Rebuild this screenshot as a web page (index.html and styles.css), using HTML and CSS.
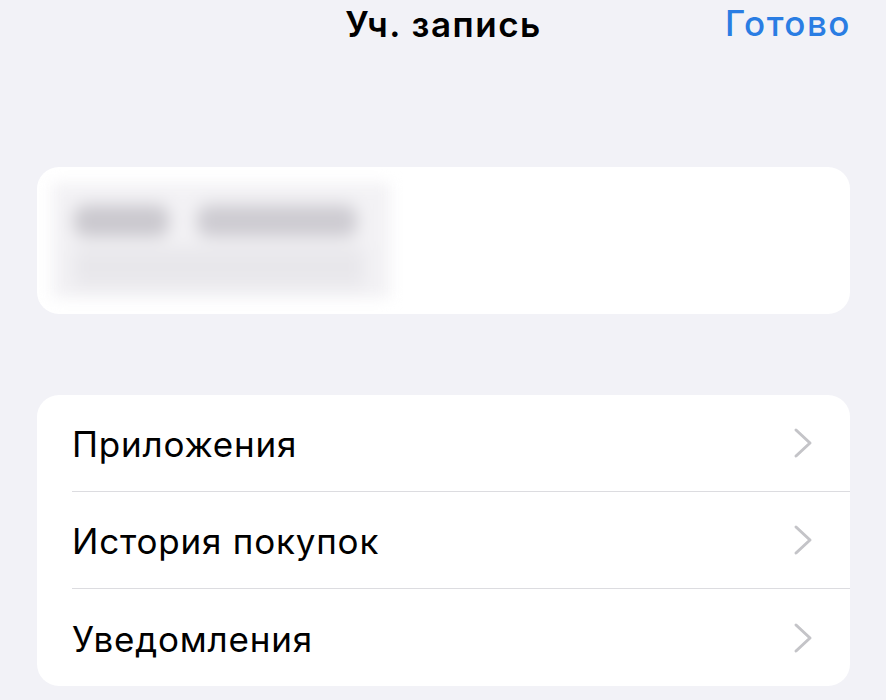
FILE: index.html
```html
<!DOCTYPE html>
<html lang="ru">
<head>
<meta charset="utf-8">
<link rel="stylesheet" href="styles.css">
</head>
<body>
<div class="screen">
  <header class="nav">
    <div class="nav-title">Уч. запись</div>
    <div class="nav-done">Готово</div>
  </header>
  <section class="card profile">
    <div class="blur-wrap">
      <div class="blur-line strong"><span class="b1"></span><span class="b2"></span></div>
      <div class="blur-line soft"></div>
    </div>
  </section>
  <section class="card list">
    <div class="row">
      <span class="label">Приложения</span>
      <svg class="chev" width="20" height="32" viewBox="0 0 20 32"><path d="M3 3 L17 16 L3 29" fill="none" stroke="#c4c4c8" stroke-width="3" stroke-linecap="round" stroke-linejoin="round"/></svg>
    </div>
    <div class="row">
      <span class="label">История покупок</span>
      <svg class="chev" width="20" height="32" viewBox="0 0 20 32"><path d="M3 3 L17 16 L3 29" fill="none" stroke="#c4c4c8" stroke-width="3" stroke-linecap="round" stroke-linejoin="round"/></svg>
    </div>
    <div class="row">
      <span class="label">Уведомления</span>
      <svg class="chev" width="20" height="32" viewBox="0 0 20 32"><path d="M3 3 L17 16 L3 29" fill="none" stroke="#c4c4c8" stroke-width="3" stroke-linecap="round" stroke-linejoin="round"/></svg>
    </div>
  </section>
</div>
</body>
</html>
```
FILE: styles.css
```css
html, body {
  margin: 0;
  padding: 0;
  background: #f2f2f7;
}
.screen {
  width: 886px;
  height: 700px;
  overflow: hidden;
  font-family: Inter, "Liberation Sans", Arial, sans-serif;
  color: #000;
  padding: 0 36px 0 37px;
  box-sizing: border-box;
}
.nav {
  height: 50px;
  display: flex;
  align-items: center;
  justify-content: center;
  position: relative;
}
.nav-title {
  font-size: 35px;
  font-weight: 600;
  letter-spacing: 1.5px;
  margin-top: -2px;
}
.nav-done {
  position: absolute;
  right: 0;
  top: -2px;
  height: 50px;
  display: flex;
  align-items: center;
  font-size: 35px;
  font-weight: 500;
  letter-spacing: 1.5px;
  margin-right: -1px;
  color: #2a7de3;
}
.card {
  background: #fff;
  border-radius: 22px;
  overflow: hidden;
}
.profile {
  margin-top: 117px;
  height: 147px;
  padding: 16px 15px;
  box-sizing: border-box;
}
.blur-wrap {
  width: 338px;
  height: 115px;
  background: #f3f2f5;
  filter: blur(7px);
  display: flex;
  flex-direction: column;
  gap: 10px;
  padding: 22px 22px 10px;
  box-sizing: border-box;
}
.blur-line.strong {
  display: flex;
  gap: 28px;
  height: 32px;
}
.b1 { width: 95px; background: #cac8ce; border-radius: 12px; filter: blur(5px); }
.b2 { width: 160px; background: #cdcbd1; border-radius: 12px; filter: blur(5px); }
.blur-line.soft {
  height: 40px;
  width: 290px;
  background: #e8e7eb;
  filter: blur(6px);
}
.list {
  margin-top: 81px;
}
.row {
  height: 97px;
  display: flex;
  align-items: center;
  justify-content: space-between;
  margin-left: 35px;
  padding-right: 37px;
  border-bottom: 1px solid #dcdce0;
  box-sizing: border-box;
}
.row:last-child {
  border-bottom: none;
}
.label {
  font-size: 35px;
  letter-spacing: 0.8px;
  padding-top: 2px;
}
.chev {
  display: block;
}
```
